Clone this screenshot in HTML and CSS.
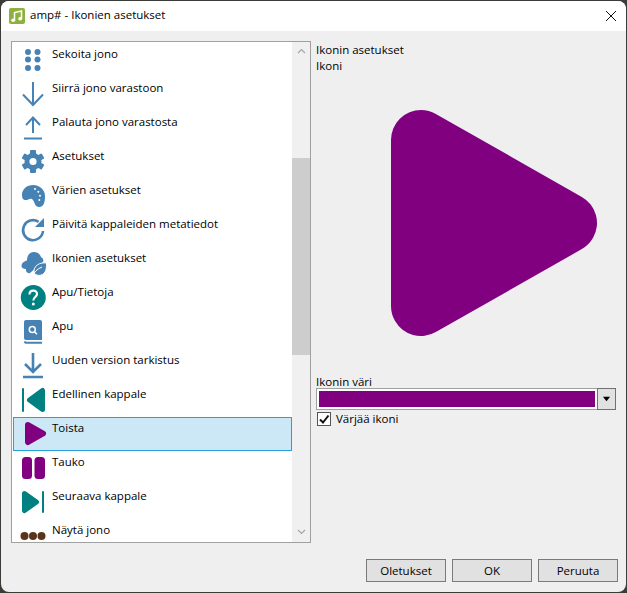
FILE: index.html
```html
<!DOCTYPE html>
<html lang="fi">
<head>
<meta charset="utf-8">
<title>amp# - Ikonien asetukset</title>
<link rel="stylesheet" href="styles.css">
</head>
<body>
<div class="window">
  <header class="titlebar">
    <svg class="app-icon" viewBox="0 0 16 16"><rect width="16" height="16" rx="2" fill="#8db13c"/><path d="M5.5 12V4.5l7-1.5v7.500" fill="none" stroke="#fff" stroke-width="1.500"/><ellipse cx="4.200" cy="12.200" rx="2" ry="1.700" fill="#fff"/><ellipse cx="11.200" cy="10.700" rx="2" ry="1.700" fill="#fff"/></svg>
    <span class="title">amp# - Ikonien asetukset</span>
    <svg class="close" viewBox="0 0 10 10"><path d="M0 0l10 10M10 0L0 10" stroke="#111" stroke-width="1" fill="none"/></svg>
  </header>
  <main class="content">
    <div class="panes">
      <div class="listbox">
        <ul class="rows">
          <li class="row"><svg class="ico" viewBox="0 0 32 32"><g class="blue"><circle cx="10" cy="8" r="3"/><circle cx="19.500" cy="8" r="3"/><circle cx="10" cy="15.500" r="3"/><circle cx="19.500" cy="15.500" r="3"/><circle cx="10" cy="24" r="3"/><circle cx="19.500" cy="24" r="3"/></g></svg><span>Sekoita jono</span></li>
          <li class="row"><svg class="ico" viewBox="0 0 32 32"><path class="line" d="M15 4v23M5 16.500L15 27l10-10.500"/></svg><span>Siirrä jono varastoon</span></li>
          <li class="row"><svg class="ico" viewBox="0 0 32 32"><path class="line" d="M15 6v15M8 13l7-7.500 7 7.500M6 26.500h18"/></svg><span>Palauta jono varastosta</span></li>
          <li class="row"><svg class="ico" viewBox="0 0 32 32"><g class="blue" transform="translate(15 15.500)"><circle r="8.500"/><g class="teeth"><rect x="-3" y="-11.500" width="6" height="5" rx="1"/><rect x="-3" y="-11.500" width="6" height="5" rx="1" transform="rotate(60)"/><rect x="-3" y="-11.500" width="6" height="5" rx="1" transform="rotate(120)"/><rect x="-3" y="-11.500" width="6" height="5" rx="1" transform="rotate(180)"/><rect x="-3" y="-11.500" width="6" height="5" rx="1" transform="rotate(240)"/><rect x="-3" y="-11.500" width="6" height="5" rx="1" transform="rotate(300)"/></g><circle class="hole" r="3.600"/></g></svg><span>Asetukset</span></li>
          <li class="row"><svg class="ico" viewBox="0 0 32 32"><path class="blue" d="M15 5c7 0 12 5 12 11 0 6-1 11-6 11-4 0-4-4-6-7-2-3-5 0-7 0-3 0-4-2-4-5C4 9 9 5 15 5z"/><g class="hole"><circle cx="17" cy="9" r="1"/><circle cx="20.300" cy="11.700" r="1"/><circle cx="22" cy="15.700" r="1"/><circle cx="21.300" cy="20" r="1"/></g></svg><span>Värien asetukset</span></li>
          <li class="row"><svg class="ico" viewBox="0 0 32 32"><path class="line thick" d="M25 17A10 10 0 1 1 20.500 7.800"/><path class="blue" d="M26 4v9h-9z"/></svg><span>Päivitä kappaleiden metatiedot</span></li>
          <li class="row"><svg class="ico" viewBox="0 0 32 32"><path class="blue" d="M3.500 18c0-3 3-5 5.500-5.500C9 7 12 4 16 4c3 0 6 2 7 5 2 1 3 3 2 5L12 25c-3 1-4.500-2-4-4-2.500 0-4.500-1-4.500-3z"/><path class="blue leaf" d="M28.500 15c-7-1-13 3-12.500 9 1 4.500 8.500 4.500 11 0 1.500-2 1.500-5.500 1.500-9z"/><path class="stem" d="M14 29c2-5 5-8 10-10"/></svg><span>Ikonien asetukset</span></li>
          <li class="row"><svg class="ico" viewBox="0 0 32 32"><circle class="teal" cx="15.300" cy="15.500" r="12.500"/><path class="qmark" d="M11.500 12.500c0-5 7.500-5 7.500-.5 0 3-3.700 3-3.700 6.500"/><circle class="hole" cx="15.300" cy="22" r="1.500"/></svg><span>Apu/Tietoja</span></li>
          <li class="row"><svg class="ico" viewBox="0 0 32 32"><path class="blue" d="M8 4h14a2 2 0 0 1 2 2v18H8a2 2 0 0 1-2-2V6a2 2 0 0 1 2-2z"/><path class="line" d="M6.500 25.500c.5 1 1 1.300 2 1.300H24"/><circle class="glass" cx="14.300" cy="13.500" r="3"/><path class="glass" d="M16.500 15.700l2.500 2.500"/></svg><span>Apu</span></li>
          <li class="row"><svg class="ico" viewBox="0 0 32 32"><path class="line thick" d="M15 3v19M7 14l8 8 8-8M5 27h20"/></svg><span>Uuden version tarkistus</span></li>
          <li class="row"><svg class="ico" viewBox="0 0 32 32"><rect class="teal" x="4" y="4" width="2" height="24" rx="1"/><path class="teal round" d="M11.500 16l13-9.500v19z"/></svg><span>Edellinen kappale</span></li>
          <li class="row selected"><svg class="ico" viewBox="0 0 32 32"><path class="purple round wide" d="M10 7l15 8.500L10 24z"/></svg><span>Toista</span></li>
          <li class="row"><svg class="ico" viewBox="0 0 32 32"><rect class="purple" x="4" y="5" width="10" height="22" rx="3.500"/><rect class="purple" x="16.500" y="5" width="10.500" height="22" rx="3.500"/></svg><span>Tauko</span></li>
          <li class="row"><svg class="ico" viewBox="0 0 32 32"><path class="teal round" d="M6.500 7.500l12 8.500-12 8.500z"/><rect class="teal" x="24" y="5" width="2" height="22" rx="1"/></svg><span>Seuraava kappale</span></li>
          <li class="row"><svg class="ico" viewBox="0 0 32 32"><g class="brown"><circle cx="6.500" cy="16" r="4"/><circle cx="15" cy="16" r="4"/><circle cx="23.500" cy="16" r="4"/></g></svg><span>Näytä jono</span></li>
        </ul>
        <div class="scrollbar">
          <svg class="chev" viewBox="0 0 9 6"><path d="M1 5l3.500-3.500L8 5"/></svg>
          <div class="thumb"></div>
          <svg class="chev chev-down" viewBox="0 0 9 6"><path d="M1 1l3.500 3.500L8 1"/></svg>
        </div>
      </div>
      <section class="settings">
        <div class="label">Ikonin asetukset</div>
        <div class="label">Ikoni</div>
        <svg class="preview" viewBox="0 0 300 300"><path class="purple big" d="M105 66l146 83-146 83z"/></svg>
        <div class="label label-short">Ikonin väri</div>
        <div class="combo">
          <div class="combo-value"><div class="swatch"></div></div>
          <div class="combo-btn"><svg viewBox="0 0 10 6"><path d="M1 .5h8L5 5.500z"/></svg></div>
        </div>
        <div class="check">
          <span class="box"><svg viewBox="0 0 12 12"><path d="M2 6.500l3 3L10.500 2.500"/></svg></span>
          <span>Värjää ikoni</span>
        </div>
      </section>
    </div>
    <footer class="buttons">
      <button class="btn">Oletukset</button>
      <button class="btn">OK</button>
      <button class="btn">Peruuta</button>
    </footer>
  </main>
</div>
</body>
</html>
```
FILE: styles.css
```css
* { box-sizing: border-box; }
html, body { margin: 0; height: 100%; }
body {
  background: #3b3b38;
  padding: 1px;
  font-family: "Open Sans", "Noto Sans", sans-serif;
  font-size: 11.5px;
  color: #000;
}
.window {
  width: 625px;
  height: 591px;
  background: #efefef;
  border-radius: 8px;
  overflow: hidden;
  display: flex;
  flex-direction: column;
}
.titlebar {
  height: 30px;
  background: #fff;
  display: flex;
  align-items: center;
  padding: 0 10px 0 8px;
  flex: none;
}
.app-icon { width: 16px; height: 16px; margin-right: 5px; }
.title { flex: 1; line-height: 14px; padding-bottom: 2px; }
.close { width: 10px; height: 10px; }
.content {
  flex: 1;
  display: flex;
  flex-direction: column;
  padding: 10px 8px 8px 10px;
}
.panes { display: flex; gap: 5px; height: 520px; }
.listbox {
  width: 300px;
  height: 502px;
  border: 1px solid #a0a0a0;
  background: #fff;
  display: flex;
  padding-left: 1px;
  overflow: hidden;
}
.rows {
  list-style: none;
  margin: 0;
  padding: 1px 0 0;
  width: 279px;
  flex: none;
}
.row {
  height: 34px;
  display: flex;
  align-items: flex-start;
  gap: 2px;
  padding: 1px 0 0 5px;
  line-height: 19px;
}
.row.selected {
  background: #cce8f6;
  outline: 1px solid #26a0da;
  outline-offset: -1px;
}
.ico { width: 32px; height: 32px; flex: none; }
.blue { fill: #4682b4; }
.teal { fill: #008080; stroke: #008080; stroke-width: 0; }
.purple { fill: #800080; stroke: #800080; stroke-width: 0; }
.brown { fill: #5a3418; }
.hole { fill: #fff; }
.line { fill: none; stroke: #4682b4; stroke-width: 2; }
.line.thick { stroke-width: 2.600; }
.round { stroke-width: 5; stroke-linejoin: round; }
.wide { stroke-width: 6; }
.big { stroke-width: 60; stroke-linejoin: round; }
.leaf { stroke: #fff; stroke-width: 1; }
.stem { fill: none; stroke: #fff; stroke-width: 1; }
.qmark { fill: none; stroke: #fff; stroke-width: 2.200; }
.glass { fill: none; stroke: #fff; stroke-width: 1.500; }
.scrollbar {
  width: 18px;
  background: #f0f0f0;
  display: flex;
  flex-direction: column;
  align-items: center;
}
.chev { width: 9px; height: 6px; margin-top: 6px; fill: none; stroke: #a6a6a6; stroke-width: 1.200; }
.chev-down { margin-top: 174px; }
.thumb { width: 18px; height: 197px; margin-top: 104px; background: #cdcdcd; }
.settings { width: 301px; flex: none; display: flex; flex-direction: column; padding-top: 1px; }
.label { height: 16px; line-height: 16px; }
.label-short { height: 14px; }
.preview { width: 300px; height: 300px; display: block; }
.combo { display: flex; height: 22px; width: 300px; border: 1px solid #a0a0a0; background: #fff; }
.combo-value { flex: 1; padding: 2px 2px 2px 2px; }
.swatch { background: #800080; height: 16px; }
.combo-btn {
  width: 19px;
  margin: -1px -1px -1px 0;
  background: #e1e1e1;
  border: 1px solid #707070;
  display: flex;
  align-items: center;
  justify-content: center;
}
.combo-btn svg { width: 9px; height: 6px; fill: #000; }
.check { display: flex; align-items: center; gap: 5px; height: 15px; margin-top: 1px; padding-left: 1px; }
.box { width: 14px; height: 14px; background: #fff; border: 1px solid #555; display: block; flex: none; }
.box svg { display: block; width: 12px; height: 12px; fill: none; stroke: #111; stroke-width: 2; }
.buttons { display: flex; justify-content: flex-end; gap: 6px; margin-top: -2px; }
.btn {
  width: 80px;
  height: 23px;
  background: #e1e1e1;
  border: 1px solid #7a7a7a;
  font: inherit;
  color: #000;
  padding: 0;
}
```
